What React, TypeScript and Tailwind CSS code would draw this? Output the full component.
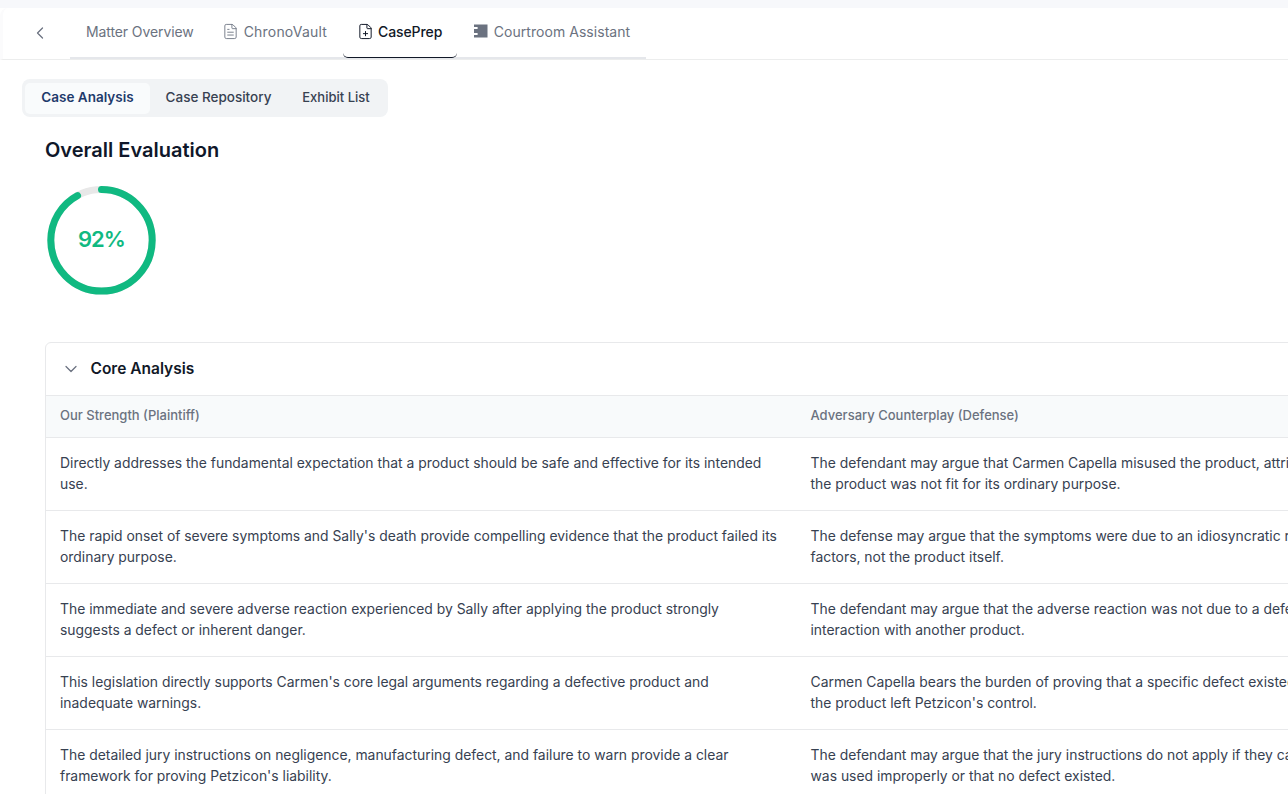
import React from "react";
import { ChevronLeft, ChevronDown, FileText, FilePlus } from "lucide-react";

const rows: [string, string, string, string][] = [
  [
    "Directly addresses the fundamental expectation that a product should be safe and effective for its intended",
    "use.",
    "The defendant may argue that Carmen Capella misused the product, attributing harm to her own actions, or that",
    "the product was not fit for its ordinary purpose.",
  ],
  [
    "The rapid onset of severe symptoms and Sally's death provide compelling evidence that the product failed its",
    "ordinary purpose.",
    "The defense may argue that the symptoms were due to an idiosyncratic reaction or other unrelated medical",
    "factors, not the product itself.",
  ],
  [
    "The immediate and severe adverse reaction experienced by Sally after applying the product strongly",
    "suggests a defect or inherent danger.",
    "The defendant may argue that the adverse reaction was not due to a defect but rather to an allergy or",
    "interaction with another product.",
  ],
  [
    "This legislation directly supports Carmen's core legal arguments regarding a defective product and",
    "inadequate warnings.",
    "Carmen Capella bears the burden of proving that a specific defect existed at the time",
    "the product left Petzicon's control.",
  ],
  [
    "The detailed jury instructions on negligence, manufacturing defect, and failure to warn provide a clear",
    "framework for proving Petzicon's liability.",
    "The defendant may argue that the jury instructions do not apply if they can show the product",
    "was used improperly or that no defect existed.",
  ],
];

function CourtIcon() {
  return (
    <svg width="14" height="14" viewBox="0 0 14 14" fill="currentColor" className="shrink-0">
      <path d="M0 .5h13.5v13H0v-2.4h3.6V9H0V5h3.6V2.9H0z" />
    </svg>
  );
}

export default function App() {
  return (
    <div className="h-[794px] w-[1288px] overflow-hidden bg-white font-['Inter','Liberation_Sans',sans-serif]">
      <div className="h-2 bg-[#f7f8fb]" />
      <nav className="flex h-[52px] items-stretch rounded-tl-lg border-b border-l-[3px] border-[#eceded] border-l-[#fbfbfc]">
        <button className="flex w-[67px] items-center pb-[2px] pl-[27px] text-[#6b7280]">
          <ChevronLeft size={20} strokeWidth={1.5} />
        </button>
        <div className="flex h-[51px] items-stretch border-b-2 border-[#e5e7eb] text-[14px] text-[#6b7280]">
          <a className="flex items-center pb-[3px] pl-[16px] pr-[13px] tracking-[-0.1px]">Matter Overview</a>
          <a className="flex items-center gap-[5px] pb-[3px] pl-[15px] pr-[16px] tracking-[0.2px]">
            <FileText size={17} strokeWidth={1.25} className="shrink-0" />
            ChronoVault
          </a>
          <a className="-mb-px flex items-center gap-[4px] rounded-b-[5px] border-b-[1.5px] border-[#111827] pb-[2.5px] pl-[14px] pr-[15px] font-medium tracking-[-0.1px] text-[#111827]">
            <FilePlus size={17} strokeWidth={1.4} className="shrink-0" />
            CasePrep
          </a>
          <a className="flex items-center gap-[6px] pb-[3px] pl-[16.5px] pr-[16px] tracking-[0.05px]">
            <CourtIcon />
            Courtroom Assistant
          </a>
        </div>
      </nav>

      <main className="pl-[22px] pt-[19px]">
        <div className="flex h-[38px] w-[366px] items-center rounded-lg bg-[#f1f3f5] px-[3px] leading-5">
          <button className="flex h-[31px] w-[125px] items-center justify-center rounded-[5px] bg-[#f9fbfc] pb-[2px] text-[13.5px] font-semibold text-[#1e3a6b]">Case Analysis</button>
          <button className="w-[137px] pb-[2px] text-center text-[13.5px] font-medium text-[#374151]">Case Repository</button>
          <button className="w-[98px] pb-[2px] text-center text-[13px] font-medium text-[#374151]">Exhibit List</button>
        </div>

        <div className="pl-[23px]">
          <h1 className="mt-[19px] text-[20px] font-semibold leading-[28px] text-[#0f172a]">Overall Evaluation</h1>

          <div className="relative ml-px mt-[21px] h-[110px] w-[110px]">
            <svg width="110" height="110" viewBox="0 0 110 110" className="-rotate-90">
              <circle cx="54.7" cy="55.5" r="50.7" fill="none" stroke="#e8e8e8" strokeWidth="7" />
              <circle cx="54.7" cy="55.5" r="50.7" fill="none" stroke="#10b981" strokeWidth="7" strokeLinecap="round" strokeDasharray="293.1 318.6" />
            </svg>
            <span className="absolute inset-0 flex items-center justify-center pb-[2px] pl-px text-[22px] font-semibold tracking-[-1px] text-[#10b981]">92%</span>
          </div>

          <section className="mt-[47px] w-[1501px] rounded-t-md border border-[#e8e9eb]">
            <div className="flex h-[52px] items-center gap-[10px] pl-[14.5px]">
              <ChevronDown size={20} strokeWidth={1.5} className="text-[#6b7280]" />
              <h2 className="text-[15.5px] font-semibold text-[#111827]">Core Analysis</h2>
            </div>
            <div className="grid h-[43px] grid-cols-2 items-center border-y border-[#e8e9eb] bg-[#f8fafb] pb-[2px] text-[13px] font-medium text-[#6b7280]">
              <div className="pl-[14px]">Our Strength (Plaintiff)</div>
              <div className="pl-[15px]">Adversary Counterplay (Defense)</div>
            </div>
            {rows.map((r, i) => (
              <div key={i} className="grid h-[73px] grid-cols-2 items-center border-b border-[#e8e9eb] text-[13.9px] leading-[21px] text-[#374151]">
                <p className="whitespace-nowrap pl-[14px]">
                  {r[0]}
                  <br />
                  {r[1]}
                </p>
                <p className="whitespace-nowrap pl-[15px]">
                  {r[2]}
                  <br />
                  {r[3]}
                </p>
              </div>
            ))}
          </section>
        </div>
      </main>
    </div>
  );
}
